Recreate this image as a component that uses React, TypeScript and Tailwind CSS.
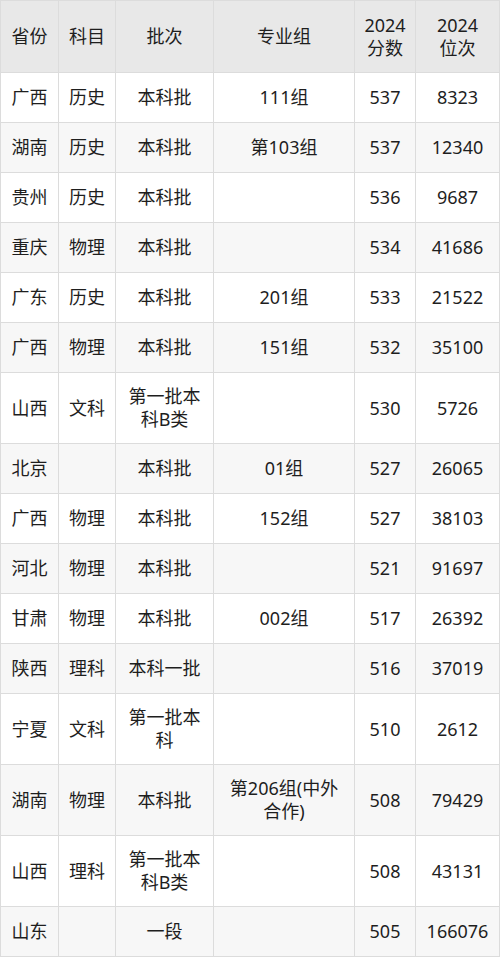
import React from "react";

type Row = {
  prov: string;
  subj: string;
  batch: React.ReactNode;
  group: React.ReactNode;
  score: string;
  rank: string;
};

const rows: Row[] = [
  { prov: "广西", subj: "历史", batch: "本科批", group: "111组", score: "537", rank: "8323" },
  { prov: "湖南", subj: "历史", batch: "本科批", group: "第103组", score: "537", rank: "12340" },
  { prov: "贵州", subj: "历史", batch: "本科批", group: "", score: "536", rank: "9687" },
  { prov: "重庆", subj: "物理", batch: "本科批", group: "", score: "534", rank: "41686" },
  { prov: "广东", subj: "历史", batch: "本科批", group: "201组", score: "533", rank: "21522" },
  { prov: "广西", subj: "物理", batch: "本科批", group: "151组", score: "532", rank: "35100" },
  { prov: "山西", subj: "文科", batch: <>第一批本<br />科B类</>, group: "", score: "530", rank: "5726" },
  { prov: "北京", subj: "", batch: "本科批", group: "01组", score: "527", rank: "26065" },
  { prov: "广西", subj: "物理", batch: "本科批", group: "152组", score: "527", rank: "38103" },
  { prov: "河北", subj: "物理", batch: "本科批", group: "", score: "521", rank: "91697" },
  { prov: "甘肃", subj: "物理", batch: "本科批", group: "002组", score: "517", rank: "26392" },
  { prov: "陕西", subj: "理科", batch: "本科一批", group: "", score: "516", rank: "37019" },
  { prov: "宁夏", subj: "文科", batch: <>第一批本<br />科</>, group: "", score: "510", rank: "2612" },
  { prov: "湖南", subj: "物理", batch: "本科批", group: <>第206组(中外<br />合作)</>, score: "508", rank: "79429" },
  { prov: "山西", subj: "理科", batch: <>第一批本<br />科B类</>, group: "", score: "508", rank: "43131" },
  { prov: "山东", subj: "", batch: "一段", group: "", score: "505", rank: "166076" },
];

const cell = "border border-[#dcdcdc] px-1 py-3 text-center align-middle whitespace-nowrap";

export default function App() {
  return (
    <div
      className="w-[500px] h-[959px] bg-white text-[#1e1e1e] text-[18px] leading-[23px]"
      style={{ fontFamily: '"Noto Sans", "Noto Sans CJK SC", sans-serif' }}
    >
      <table className="w-[499px] border-collapse table-fixed">
        <colgroup>
          <col className="w-[58px]" />
          <col className="w-[57px]" />
          <col className="w-[98px]" />
          <col className="w-[141px]" />
          <col className="w-[61px]" />
          <col className="w-[84px]" />
        </colgroup>
        <thead>
          <tr className="bg-[#e8e8e8] h-[72px]">
            <th className={cell + " font-normal"}>省份</th>
            <th className={cell + " font-normal"}>科目</th>
            <th className={cell + " font-normal"}>批次</th>
            <th className={cell + " font-normal"}>专业组</th>
            <th className={cell + " font-normal"}>2024<br />分数</th>
            <th className={cell + " font-normal"}>2024<br />位次</th>
          </tr>
        </thead>
        <tbody>
          {rows.map((r, i) => (
            <tr key={i} className={"h-[50px] " + (i % 2 === 0 ? "bg-white" : "bg-[#f7f7f7]")}>
              <td className={cell}>{r.prov}</td>
              <td className={cell}>{r.subj}</td>
              <td className={cell}>{r.batch}</td>
              <td className={cell}>{r.group}</td>
              <td className={cell}>{r.score}</td>
              <td className={cell}>{r.rank}</td>
            </tr>
          ))}
        </tbody>
      </table>
    </div>
  );
}
